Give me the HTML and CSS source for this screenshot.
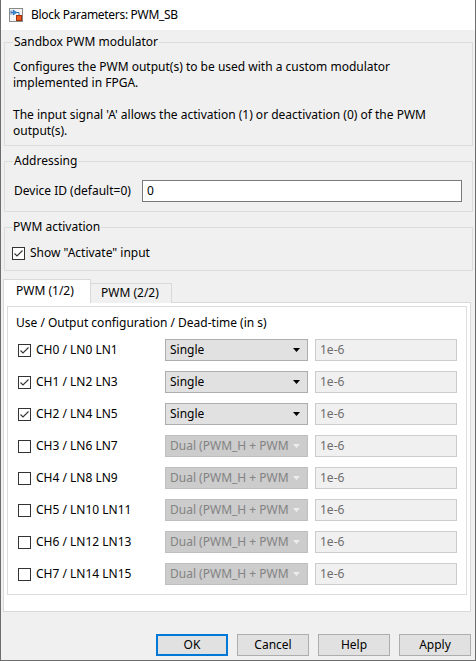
FILE: index.html
```
<!DOCTYPE html>
<html>
<head>
<meta charset="utf-8">
<link rel="stylesheet" href="styles.css">
</head>
<body>
<div class="window">
  <div class="titlebar">
    <svg class="appicon" width="14" height="14" viewBox="0 0 14 14">
      <rect x="0.5" y="0.5" width="13" height="13" fill="#f4f4f4" stroke="#8a8a8a"/>
      <path d="M2 2.5 L2 6.5 M2 4.5 L4 4.5" stroke="#2f6fb8" stroke-width="1" fill="none"/>
      <path d="M4 2 L8 4.5 L4 7 Z" fill="#3d8fd6" stroke="#1f5fa8" stroke-width="0.6"/>
      <path d="M8 4.5 L10 4.5 L10 7" stroke="#2f6fb8" fill="none"/>
      <rect x="7.5" y="7.5" width="5" height="5" fill="#e8581c" stroke="#a0300c"/>
    </svg>
    <span class="title">Block Parameters: PWM_SB</span>
  </div>
  <div class="content">
    <fieldset class="group g1">
      <legend>Sandbox PWM modulator</legend>
      <p class="desc">Configures the PWM output(s) to be used with a custom modulator<br>implemented in FPGA.</p>
      <p class="desc">The input signal 'A' allows the activation (1) or deactivation (0) of the PWM<br>output(s).</p>
    </fieldset>
    <fieldset class="group g2">
      <legend>Addressing</legend>
      <div class="field">
        <label class="flabel">Device ID (default=0)</label>
        <div class="input">0</div>
      </div>
    </fieldset>
    <fieldset class="group g3">
      <legend>PWM activation</legend>
      <div class="check-row">
        <span class="cb checked"><svg width="11" height="11" viewBox="0 0 11 11"><path d="M1.5 5.5 L4 8 L9.5 2.5" stroke="#333" stroke-width="1.1" fill="none"/></svg></span>
        <span>Show "Activate" input</span>
      </div>
    </fieldset>
    <div class="tabs">
      <div class="tab active">PWM (1/2)</div>
      <div class="tab">PWM (2/2)</div>
    </div>
    <div class="panel">
      <div class="inner">
        <div class="heading">Use / Output configuration / Dead-time (in s)</div>
        <div class="rows">
          <div class="row">
            <div class="chk"><span class="cb checked"><svg width="11" height="11" viewBox="0 0 11 11"><path d="M1.5 5.5 L4 8 L9.5 2.5" stroke="#333" stroke-width="1.1" fill="none"/></svg></span><span>CH0 / LN0 LN1</span></div>
            <div class="select"><span class="stext">Single</span><svg class="arrow" width="7" height="4" viewBox="0 0 7 4"><path d="M0 0 L7 0 L3.5 4 Z" fill="#000"/></svg></div>
            <div class="edit">1e-6</div>
          </div>
          <div class="row">
            <div class="chk"><span class="cb checked"><svg width="11" height="11" viewBox="0 0 11 11"><path d="M1.5 5.5 L4 8 L9.5 2.5" stroke="#333" stroke-width="1.1" fill="none"/></svg></span><span>CH1 / LN2 LN3</span></div>
            <div class="select"><span class="stext">Single</span><svg class="arrow" width="7" height="4" viewBox="0 0 7 4"><path d="M0 0 L7 0 L3.5 4 Z" fill="#000"/></svg></div>
            <div class="edit">1e-6</div>
          </div>
          <div class="row">
            <div class="chk"><span class="cb checked"><svg width="11" height="11" viewBox="0 0 11 11"><path d="M1.5 5.5 L4 8 L9.5 2.5" stroke="#333" stroke-width="1.1" fill="none"/></svg></span><span>CH2 / LN4 LN5</span></div>
            <div class="select"><span class="stext">Single</span><svg class="arrow" width="7" height="4" viewBox="0 0 7 4"><path d="M0 0 L7 0 L3.5 4 Z" fill="#000"/></svg></div>
            <div class="edit">1e-6</div>
          </div>
          <div class="row">
            <div class="chk"><span class="cb"></span><span>CH3 / LN6 LN7</span></div>
            <div class="select disabled"><span class="stext">Dual (PWM_H + PWM</span><svg class="arrow" width="7" height="4" viewBox="0 0 7 4"><path d="M0 0 L7 0 L3.5 4 Z" fill="#ededed"/></svg></div>
            <div class="edit">1e-6</div>
          </div>
          <div class="row">
            <div class="chk"><span class="cb"></span><span>CH4 / LN8 LN9</span></div>
            <div class="select disabled"><span class="stext">Dual (PWM_H + PWM</span><svg class="arrow" width="7" height="4" viewBox="0 0 7 4"><path d="M0 0 L7 0 L3.5 4 Z" fill="#ededed"/></svg></div>
            <div class="edit">1e-6</div>
          </div>
          <div class="row">
            <div class="chk"><span class="cb"></span><span>CH5 / LN10 LN11</span></div>
            <div class="select disabled"><span class="stext">Dual (PWM_H + PWM</span><svg class="arrow" width="7" height="4" viewBox="0 0 7 4"><path d="M0 0 L7 0 L3.5 4 Z" fill="#ededed"/></svg></div>
            <div class="edit">1e-6</div>
          </div>
          <div class="row">
            <div class="chk"><span class="cb"></span><span>CH6 / LN12 LN13</span></div>
            <div class="select disabled"><span class="stext">Dual (PWM_H + PWM</span><svg class="arrow" width="7" height="4" viewBox="0 0 7 4"><path d="M0 0 L7 0 L3.5 4 Z" fill="#ededed"/></svg></div>
            <div class="edit">1e-6</div>
          </div>
          <div class="row">
            <div class="chk"><span class="cb"></span><span>CH7 / LN14 LN15</span></div>
            <div class="select disabled"><span class="stext">Dual (PWM_H + PWM</span><svg class="arrow" width="7" height="4" viewBox="0 0 7 4"><path d="M0 0 L7 0 L3.5 4 Z" fill="#ededed"/></svg></div>
            <div class="edit">1e-6</div>
          </div>
        </div>
      </div>
    </div>
    <div class="buttons">
      <div class="btn default">OK</div>
      <div class="btn">Cancel</div>
      <div class="btn">Help</div>
      <div class="btn">Apply</div>
    </div>
  </div>
</div>
</body>
</html>
```
FILE: styles.css
```
* { box-sizing: border-box; }
html, body { margin: 0; padding: 0; background: #fff; }
body {
  font-family: "Noto Sans", "DejaVu Sans", sans-serif;
  font-size: 12px;
  line-height: 16px;
  color: #000;
}
.window {
  width: 476px;
  height: 661px;
  border: 1px solid #6d6d6d;
  border-top: none;
  background: #f0f0f0;
  display: flex;
  flex-direction: column;
}
.titlebar {
  height: 30px;
  flex: none;
  background: #fff;
  display: flex;
  align-items: center;
  padding-left: 8px;
  gap: 8px;
}
.appicon { display: block; }
.title { color: #000; letter-spacing: -0.3px; }
.content {
  flex: 1;
  display: flex;
  flex-direction: column;
  padding: 4px 2px 0 3px;
}
.group {
  margin: 0;
  border: 1px solid #dcdcdc;
  padding: 0 8px 6px 8px;
  min-width: 0;
}
.group legend {
  padding: 0 1px;
  line-height: 16px;
}
.g1 { padding-top: 9px; padding-bottom: 6px; }
.desc { margin: 0; }
.desc + .desc { margin-top: 16px; }
.g2 { margin-top: 7px; padding-top: 11px; padding-bottom: 9px; }
.field { display: flex; align-items: center; }
.flabel { padding-left: 1px; width: 129px; }
.input {
  width: 320px;
  height: 22px;
  background: #fff;
  border: 1px solid #7a7a7a;
  padding: 2px 0 0 4px;
}
.g3 { margin-top: 7px; padding-top: 10px; padding-bottom: 9px; padding-left: 7px; }
.check-row { display: flex; align-items: center; gap: 5px; }
.cb {
  width: 13px;
  height: 13px;
  flex: none;
  border: 1px solid #333;
  background: #fff;
  display: inline-flex;
  align-items: center;
  justify-content: center;
}
.cb svg { display: block; }
.tabs {
  margin-top: 8px;
  margin-left: -1px;
  display: flex;
  align-items: flex-end;
  height: 24px;
  position: relative;
  z-index: 1;
  margin-bottom: -1px;
}
.tab {
  border: 1px solid #d9d9d9;
  border-bottom: none;
  height: 20px;
  padding: 1px 0 0 10px;
  width: 82px;
  background: #f0f0f0;
}
.tab.active {
  height: 24px;
  width: 88px;
  background: #fff;
  padding: 3px 0 0 12px;
}
.tab.active + .tab { margin-left: -1px; }
.panel {
  margin-left: -1px;
  width: 468px;
  border: 1px solid #d9d9d9;
  background: #fff;
  padding: 3px 3px 16px 3px;
}
.inner {
  border: 1px solid #dcdcdc;
  padding: 8px 0 9px 8px;
}
.heading { height: 16px; }
.rows {
  margin-top: 8px;
  display: flex;
  flex-direction: column;
  gap: 10px;
}
.row {
  display: grid;
  grid-template-columns: 140px 143px 142px;
  column-gap: 7px;
  padding-left: 2px;
  height: 22px;
  align-items: center;
}
.chk { display: flex; align-items: center; gap: 5px; }
.select {
  height: 22px;
  background: #e1e1e1;
  border: 1px solid #adadad;
  display: flex;
  align-items: center;
  padding-left: 4px;
  position: relative;
  overflow: hidden;
}
.stext { white-space: nowrap; overflow: hidden; max-width: 120px; }
.select .arrow { position: absolute; right: 7px; top: 8px; }
.select.disabled {
  background: #cccccc;
  border-color: #bfbfbf;
  color: #838383;
}
.edit {
  height: 22px;
  background: #f0f0f0;
  border: 1px solid #cccccc;
  color: #6d6d6d;
  padding: 2px 0 0 4px;
}
.buttons {
  margin-top: 22px;
  display: flex;
  justify-content: flex-end;
  gap: 9px;
  padding-right: 2px;
}
.btn {
  width: 72px;
  height: 22px;
  background: #e1e1e1;
  border: 1px solid #adadad;
  text-align: center;
  line-height: 20px;
}
.btn.default { border: 2px solid #0078d7; line-height: 18px; }
```
